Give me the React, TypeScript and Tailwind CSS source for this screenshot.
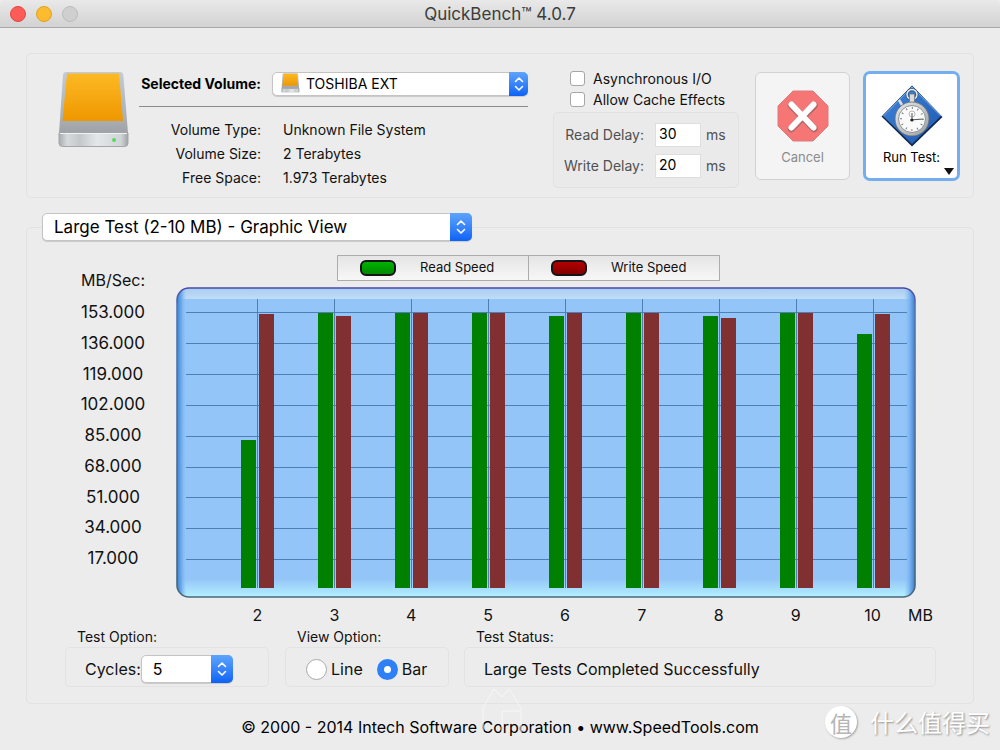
import { useState, type ReactNode } from "react";

const results = [
  { size: 2, read: 82, write: 151.9 },
  { size: 3, read: 152.5, write: 150.8 },
  { size: 4, read: 152.5, write: 152.5 },
  { size: 5, read: 152.5, write: 152.5 },
  { size: 6, read: 150.8, write: 152.5 },
  { size: 7, read: 152.5, write: 152.5 },
  { size: 8, read: 150.8, write: 149.7 },
  { size: 9, read: 152.5, write: 152.5 },
  { size: 10, read: 140.8, write: 151.9 },
];

const ticks = [153, 136, 119, 102, 85, 68, 51, 34, 17];

const CHART_W = 740;
const CHART_H = 311;
const BASE_Y = 301;
const UNIT = 276 / 153;

function DriveIcon({ className, id }: { className: string; id: string }) {
  return (
    <svg viewBox="0 0 72 78" className={className} aria-hidden="true">
      <defs>
        <linearGradient id={`${id}-face`} x1="0" y1="0" x2="0" y2="1">
          <stop offset="0" stopColor="#fdb924" />
          <stop offset="1" stopColor="#ee9700" />
        </linearGradient>
        <linearGradient id={`${id}-body`} x1="0" y1="0" x2="0" y2="1">
          <stop offset="0" stopColor="#c3cbd6" />
          <stop offset="0.75" stopColor="#a9adb2" />
          <stop offset="1" stopColor="#9b9ea2" />
        </linearGradient>
        <linearGradient id={`${id}-base`} x1="0" y1="0" x2="1" y2="0">
          <stop offset="0" stopColor="#a9acae" />
          <stop offset="0.12" stopColor="#d6dadc" />
          <stop offset="0.3" stopColor="#c3c8cb" />
          <stop offset="0.55" stopColor="#e3e7e9" />
          <stop offset="0.9" stopColor="#cfd4d6" />
          <stop offset="1" stopColor="#9fa3a6" />
        </linearGradient>
      </defs>
      <path d="M8 1h54q3 0 3.300 3l4.700 58v4H1v-4L5 4q.3-3 3-3Z" fill={`url(#${id}-body)`} />
      <path d="M9 2.500h52L65 50H4.500Z" fill={`url(#${id}-face)`} />
      <path d="M1 62h69v10q0 3.500-3.500 3.500h-62Q1 75.500 1 72Z" fill={`url(#${id}-base)`} stroke="#a2a6a9" strokeWidth="1" />
      <path d="M2 62.500h67" stroke="#f0f2f3" strokeWidth="1" />
      <circle cx="56" cy="69" r="2" fill="#5bd85b" />
    </svg>
  );
}

function Chevrons({ className }: { className: string }) {
  return (
    <span
      className={`pointer-events-none absolute inset-y-0 right-0 flex items-center justify-center rounded-r-[5px] bg-linear-to-b from-[#5ea4fb] to-[#0b62f6] ${className}`}
    >
      <svg viewBox="0 0 10 16" className="h-4 w-[10px]" fill="none" stroke="#fff" strokeWidth="1.600" strokeLinecap="round" strokeLinejoin="round" aria-hidden="true">
        <path d="M1.500 5.500 5 2l3.500 3.500M1.500 10.500 5 14l3.500-3.500" />
      </svg>
    </span>
  );
}

const selectBase =
  "block w-full appearance-none rounded-[5px] border border-[#c4c4c4] bg-white text-black shadow-[0_1px_1px_rgba(0,0,0,0.15)] outline-none";

function CancelIcon() {
  return (
    <svg viewBox="0 0 52 52" className="size-[52px]" aria-hidden="true">
      <path d="M16 1h20l15 15v20L36 51H16L1 36V16Z" fill="#f67676" stroke="#dc7c7c" strokeWidth="1" />
      <path d="M14.500 15.500 37 38.500M37 15.500 14.500 38.500" stroke="#b06868" strokeWidth="7.500" strokeLinecap="round" />
      <path d="M14.500 14.500 36.500 37.500M36.500 14.500 14.500 37.500" stroke="#fff" strokeWidth="6" strokeLinecap="round" />
    </svg>
  );
}

function StopwatchIcon() {
  return (
    <svg viewBox="0 0 62 62" className="size-[62px]" aria-hidden="true">
      <defs>
        <linearGradient id="diamond" x1="0" y1="0" x2="1" y2="1">
          <stop offset="0" stopColor="#3f86d9" />
          <stop offset="1" stopColor="#1e57b0" />
        </linearGradient>
        <linearGradient id="case" x1="0" y1="0" x2="1" y2="1">
          <stop offset="0" stopColor="#e9eaea" />
          <stop offset="1" stopColor="#9c9fa1" />
        </linearGradient>
      </defs>
      <path d="M31 .5 61.500 32 31 61.500 .5 31.500Z" fill="#12284d" />
      <path d="M31 1 60 31 31 59 2 31Z" fill="url(#diamond)" />
      <path d="M2.500 31 31 2l28.500 29" fill="none" stroke="#6fa9e8" strokeWidth="1" />
      <circle cx="31" cy="9.500" r="5" fill="none" stroke="#3e5878" strokeWidth="2.800" />
      <circle cx="31" cy="9.500" r="5" fill="none" stroke="#eceeef" strokeWidth="1.400" />
      <path d="M28.500 9h5v9h-5Z" fill="#d9dbdc" stroke="#71767b" strokeWidth=".8" />
      <path d="m18 15 3 5" stroke="#dcdedf" strokeWidth="2.600" />
      <circle cx="31" cy="34" r="17" fill="url(#case)" stroke="#6b7074" strokeWidth=".8" />
      <circle cx="31" cy="34" r="13.500" fill="#fafafa" stroke="#8f9294" strokeWidth="1" />
      <circle cx="31" cy="34" r="11" fill="none" stroke="#777" strokeWidth="2" strokeDasharray="1 4.760" strokeDashoffset=".5" />
      <circle cx="31" cy="29" r="3" fill="none" stroke="#aaa" strokeWidth=".8" />
      <path d="M29 35 42.500 34M31 34v-6" stroke="#555" strokeWidth="1" />
      <circle cx="31" cy="35" r="1.500" fill="#222" />
    </svg>
  );
}

function Chart({ line }: { line: boolean }) {
  const x = (i: number) => 81 + i * 77;
  const h = (v: number) => Math.round(v * UNIT);
  const points = (key: "read" | "write") =>
    results.map((r, i) => `${x(i)},${BASE_Y - h(r[key])}`).join(" ");
  return (
    <svg
      viewBox={`0 0 ${CHART_W} ${CHART_H}`}
      preserveAspectRatio="none"
      className="block h-[311px] w-full"
      role="img"
      aria-label="Read and write speed by transfer size"
    >
      <defs>
        <linearGradient id="panel" x1="0" y1="0" x2="0" y2="1">
          <stop offset="0" stopColor="#a9cdf3" />
          <stop offset="0.034" stopColor="#c0dbf6" />
          <stop offset="0.036" stopColor="#93c5f8" />
          <stop offset="0.940" stopColor="#93c5f8" />
          <stop offset="1" stopColor="#b4f0ff" />
        </linearGradient>
        <linearGradient id="sides" x1="0" y1="0" x2="1" y2="0">
          <stop offset="0" stopColor="#3f82d2" />
          <stop offset="0.006" stopColor="#6fabec" />
          <stop offset="0.013" stopColor="#93c5f8" stopOpacity="0" />
          <stop offset="0.985" stopColor="#93c5f8" stopOpacity="0" />
          <stop offset="0.994" stopColor="#6fabec" />
          <stop offset="1" stopColor="#3c7ccb" />
        </linearGradient>
        <linearGradient id="rim" x1="0" y1="0" x2="0" y2="1">
          <stop offset="0" stopColor="#4b48a8" />
          <stop offset="0.060" stopColor="#5378b0" />
          <stop offset="1" stopColor="#47687c" />
        </linearGradient>
      </defs>
      <rect x="1" y="1" width="738" height="309" rx="12" fill="url(#panel)" />
      <rect x="1" y="1" width="738" height="309" rx="12" fill="url(#sides)" stroke="url(#rim)" strokeWidth="1.600" />
      <g shapeRendering="crispEdges">
        {ticks.map((t) => (
          <rect key={t} x="10" y={BASE_Y - Math.round(t * 1.816) + 2} width="721" height="1" fill="#4c80b7" />
        ))}
        {results.map((r, i) => (
          <rect key={r.size} x={x(i)} y="12" width="1" height="289" fill="#4c80b7" />
        ))}
        {!line &&
          results.map((r, i) => (
            <g key={r.size}>
              <rect x={x(i) - 16} y={BASE_Y - h(r.read)} width="15" height={h(r.read)} fill="#008000" />
              <rect x={x(i) + 2} y={BASE_Y - h(r.write)} width="15" height={h(r.write)} fill="#803030" />
            </g>
          ))}
      </g>
      {line && (
        <g fill="none" strokeWidth="2">
          <polyline points={points("read")} stroke="#008000" />
          <polyline points={points("write")} stroke="#803030" />
        </g>
      )}
    </svg>
  );
}

function Swatch({ tone }: { tone: string }) {
  return <span className={`h-4 w-9 rounded-[6px] border-2 border-[#151515] ${tone}`} />;
}

function Group({ title, className, children }: { title: string; className: string; children: ReactNode }) {
  return (
    <section className={className}>
      <h2 className="pl-3 text-sm leading-5">{title}</h2>
      <div className="flex h-10 items-center rounded-[5px] border border-[#e3e3e3] pt-1 pl-[19px]">{children}</div>
    </section>
  );
}

function DelayRow({ id, label, value }: { id: string; label: string; value: string }) {
  return (
    <div className="flex items-center">
      <label htmlFor={id} className="w-[90px] text-right">{label}</label>
      <input
        id={id}
        defaultValue={value}
        className="mx-[5px] ml-[11px] h-6 w-[46px] border border-[#dedede] bg-white px-[3px] pb-1 text-sm leading-[18px] text-black outline-none"
      />
      <span>ms</span>
    </div>
  );
}

export default function App() {
  const [view, setView] = useState("bar");
  return (
    <div className="min-h-[750px] bg-[#ececec] font-['Inter','Liberation_Sans',sans-serif] text-[#111]">
      <header className="relative flex h-7 items-center justify-center rounded-t-[5px] border-b border-[#a9a9a9] bg-linear-to-b from-[#e9e9e9] to-[#d2d2d2]">
        <div className="absolute left-[10px] flex gap-[10px]">
          <button aria-label="Close" className="size-4 rounded-full border border-[#e2463f] bg-[#fc5b57]" />
          <button aria-label="Minimize" className="size-4 rounded-full border border-[#dfa023] bg-[#fdbc2e]" />
          <button aria-label="Zoom" disabled className="size-4 rounded-full border border-[#bcbcbc] bg-[#cfcfcf]" />
        </div>
        <h1 className="text-[17px] leading-6 text-[#3c3c3c]">QuickBench™ 4.0.7</h1>
      </header>

      <main className="px-[26px] pt-[25px]">
        <section className="flex h-[145px] items-start justify-between rounded-[5px] border border-[#e2e2e2] pr-[13px] pl-[31px]">
          <div className="flex pt-[17px]">
            <DriveIcon id="drive" className="h-[78px] w-[72px]" />
            <div className="ml-1 pt-px">
              <div className="flex items-center">
                <label htmlFor="volume" className="w-[127px] text-right text-sm font-bold whitespace-nowrap text-black">Selected Volume:</label>
                <div className="relative ml-[11px] w-64">
                  <select id="volume" className={`${selectBase} h-6 pr-6 pl-[33px] text-sm leading-5`}>
                    <option>TOSHIBA EXT</option>
                  </select>
                  <DriveIcon id="drive-small" className="pointer-events-none absolute top-px left-[9px] h-5 w-[19px]" />
                  <Chevrons className="w-[19px]" />
                </div>
              </div>
              <div className="mt-[10px] mb-[11px] ml-[5px] h-px bg-[#8b8b8b]" />
              <dl className="grid grid-cols-[127px_1fr] gap-x-[22px] text-sm leading-6">
                <dt className="text-right">Volume Type:</dt>
                <dd>Unknown File System</dd>
                <dt className="text-right">Volume Size:</dt>
                <dd>2 Terabytes</dd>
                <dt className="text-right">Free Space:</dt>
                <dd>1.973 Terabytes</dd>
              </dl>
            </div>
          </div>

          <div className="flex">
            <div className="w-[186px] pt-[14px] text-sm">
              <label className="flex h-[21px] items-center gap-2 pl-[17px] whitespace-nowrap">
                <input type="checkbox" className="size-[15px] appearance-none rounded-[3px] border border-[#a6a6a6] bg-white checked:bg-[#2f80f7]" />
                Asynchronous I/O
              </label>
              <label className="flex h-[21px] items-center gap-2 pl-[17px] whitespace-nowrap">
                <input type="checkbox" className="size-[15px] appearance-none rounded-[3px] border border-[#a6a6a6] bg-white checked:bg-[#2f80f7]" />
                Allow Cache Effects
              </label>
              <div className="mt-[2px] flex flex-col gap-[7px] rounded-[5px] border border-[#e1e1e1] bg-[#eaeaea] pt-[10px] pb-[9px] text-[#505050]">
                <DelayRow id="read-delay" label="Read Delay:" value="30" />
                <DelayRow id="write-delay" label="Write Delay:" value="20" />
              </div>
            </div>
            <button disabled className="mt-[18px] ml-4 flex h-[108px] w-[95px] flex-col items-center rounded-[6px] border border-[#d2d2d2] bg-[#f4f4f4] pt-[17px] text-[13px] leading-6 text-[#8b8b8b]">
              <CancelIcon />
              <span className="mt-[3px]">Cancel</span>
            </button>
            <button className="relative mt-[17px] ml-[13px] flex h-[110px] w-[97px] flex-col items-center rounded-[7px] border-3 border-[#72aef0] bg-white pt-[11px] text-[13px] leading-6 text-black">
              <StopwatchIcon />
              <span className="-mt-[2px]">Run Test:</span>
              <svg viewBox="0 0 10 7" className="absolute right-[3px] bottom-[3px] h-[7px] w-[10px]" aria-hidden="true">
                <path d="M0 0h10L5 7Z" fill="#111" />
              </svg>
            </button>
          </div>
        </section>

        <fieldset className="mt-[15px] min-w-0 rounded-[5px] border border-[#e2e2e2] pb-4">
          <legend className="ml-[15px]">
            <div className="relative w-[430px]">
              <select aria-label="Test and view" className={`${selectBase} h-7 pr-6 pl-[11px] text-[17px] leading-6`}>
                <option>Large Test (2-10 MB) - Graphic View</option>
              </select>
              <Chevrons className="w-[22px]" />
            </div>
          </legend>

          <div className="mt-[14px] mr-[57px] flex">
            <div className="mr-[13px] ml-9 w-[100px] pt-[13px] text-center text-[17px] leading-6">
              <div className="text-base leading-6">MB/Sec:</div>
              <div className="mt-2 flex h-[270px] flex-col justify-between">
                {ticks.map((t) => (
                  <div key={t}>{t}.000</div>
                ))}
              </div>
            </div>
            <div className="min-w-0 flex-1">
              <div className="ml-[161px] flex h-[26px] w-[383px] border border-[#a9aeaa] bg-linear-to-b from-[#e5e5e5] to-[#f7f7f7] text-[13px]">
                <div className="flex flex-1 items-center gap-6 border-r border-[#a9aeaa] pl-[22px]">
                  <Swatch tone="bg-linear-to-b from-[#00b400] to-[#008800]" />
                  Read Speed
                </div>
                <div className="flex flex-1 items-center gap-6 pl-[22px]">
                  <Swatch tone="bg-linear-to-b from-[#b40000] to-[#820000]" />
                  Write Speed
                </div>
              </div>
              <div className="mt-[6px]">
                <Chart line={view === "line"} />
              </div>
              <div className="relative mt-[5px] flex pr-[5px] pl-[43px] text-base leading-6">
                {results.map((r) => (
                  <span key={r.size} className="flex-1 text-center">{r.size}</span>
                ))}
                <span className="absolute -right-[17px]">MB</span>
              </div>
            </div>
          </div>

          <div className="mr-[37px] ml-[38px] flex">
            <Group title="Test Option:" className="w-[204px]">
              <label htmlFor="cycles" className="text-base">Cycles:</label>
              <div className="relative w-[92px]">
                <select id="cycles" defaultValue="5" className={`${selectBase} h-7 pl-[11px] text-base leading-6`}>
                  <option>1</option>
                  <option>5</option>
                  <option>10</option>
                </select>
                <Chevrons className="w-[22px]" />
              </div>
            </Group>
            <Group title="View Option:" className="ml-4 w-[164px]">
              <div className="flex gap-[14px] pl-px text-base leading-6">
                {["Line", "Bar"].map((name) => (
                  <label key={name} className="flex items-center gap-1">
                    <input
                      type="radio"
                      name="view"
                      checked={view === name.toLowerCase()}
                      onChange={() => setView(name.toLowerCase())}
                      className="size-[21px] appearance-none rounded-full border border-[#a9a9a9] bg-white checked:border-[7px] checked:border-[#2f80f7]"
                    />
                    {name}
                  </label>
                ))}
              </div>
            </Group>
            <Group title="Test Status:" className="ml-[15px] min-w-0 flex-1">
              <p className="text-base leading-6 whitespace-nowrap">Large Tests Completed Successfully</p>
            </Group>
          </div>
        </fieldset>
      </main>

      <footer className="relative flex h-[46px] items-center justify-center text-base leading-6 text-black">
        <p>© 2000 - 2014 Intech Software Corporation • www.SpeedTools.com</p>
        <svg viewBox="0 0 40 46" className="pointer-events-none absolute -top-4 left-1/2 -ml-[18px] h-[46px] w-10" fill="none" stroke="#f7f7f7" strokeWidth="1" aria-hidden="true">
          <path d="M1 44V20L12 1l8 8 7-8 12 19v24M20 44V23h18" />
        </svg>
        <div className="absolute top-[2px] right-[10px] flex items-center gap-[13px] font-['Noto_Sans_CJK_SC',sans-serif] text-white">
          <span className="flex size-8 items-center justify-center rounded-full bg-white text-[22px] leading-8 text-[#b5b5b5] shadow-[1px_1px_2px_rgba(0,0,0,0.3)]">值</span>
          <span className="text-2xl leading-8 text-shadow-[1px_1px_2px_rgb(0_0_0/0.4)]">什么值得买</span>
        </div>
      </footer>
    </div>
  );
}
